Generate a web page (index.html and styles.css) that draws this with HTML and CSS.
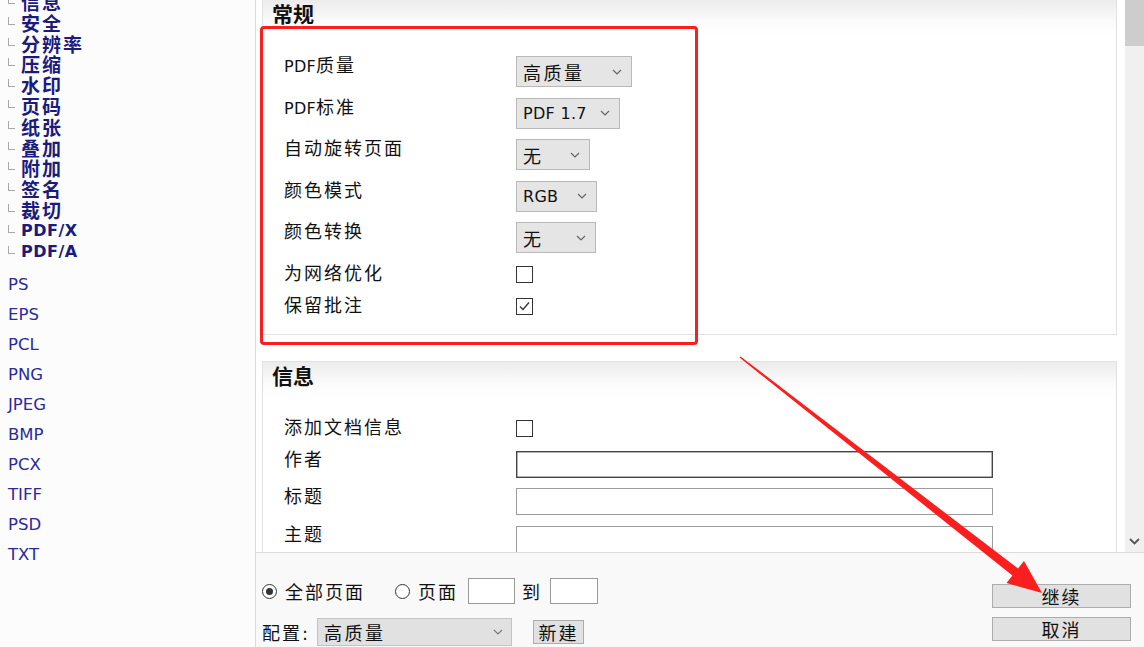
FILE: index.html
```html
<!DOCTYPE html>
<html lang="zh-CN">
<head>
    <meta charset="UTF-8">
    <title>PDF 设置</title>
    <link rel="stylesheet" href="styles.css">
</head>
<body>
<div class="app">
    <nav class="sidebar">
        <ul class="tree">
            <li><span class="branch"></span>信息</li>
            <li><span class="branch"></span>安全</li>
            <li><span class="branch"></span>分辨率</li>
            <li><span class="branch"></span>压缩</li>
            <li><span class="branch"></span>水印</li>
            <li><span class="branch"></span>页码</li>
            <li><span class="branch"></span>纸张</li>
            <li><span class="branch"></span>叠加</li>
            <li><span class="branch"></span>附加</li>
            <li><span class="branch"></span>签名</li>
            <li><span class="branch"></span>裁切</li>
            <li class="latin"><span class="branch"></span>PDF/X</li>
            <li class="latin"><span class="branch"></span>PDF/A</li>
        </ul>
        <ul class="formats">
            <li>PS</li>
            <li>EPS</li>
            <li>PCL</li>
            <li>PNG</li>
            <li>JPEG</li>
            <li>BMP</li>
            <li>PCX</li>
            <li>TIFF</li>
            <li>PSD</li>
            <li>TXT</li>
        </ul>
    </nav>

    <main class="main">
        <div class="scroller">
            <div class="content">
                <section class="group first">
                    <h2>常规</h2>
                    <div class="rows">
                        <div class="row sel">
                            <span class="label"><span class="en">PDF</span>质量</span>
                            <div class="combo" style="width: 116px">高质量
                                <svg width="10" height="6" viewBox="0 0 10 6"><polyline points="1,1 5,5 9,1" fill="none" stroke="#666" stroke-width="1.2"/></svg>
                            </div>
                        </div>
                        <div class="row sel">
                            <span class="label"><span class="en">PDF</span>标准</span>
                            <div class="combo" style="width: 104px"><span class="en">PDF 1.7</span>
                                <svg width="10" height="6" viewBox="0 0 10 6"><polyline points="1,1 5,5 9,1" fill="none" stroke="#666" stroke-width="1.2"/></svg>
                            </div>
                        </div>
                        <div class="row sel">
                            <span class="label">自动旋转页面</span>
                            <div class="combo" style="width: 74px">无
                                <svg width="10" height="6" viewBox="0 0 10 6"><polyline points="1,1 5,5 9,1" fill="none" stroke="#666" stroke-width="1.2"/></svg>
                            </div>
                        </div>
                        <div class="row sel">
                            <span class="label">颜色模式</span>
                            <div class="combo" style="width: 81px"><span class="en">RGB</span>
                                <svg width="10" height="6" viewBox="0 0 10 6"><polyline points="1,1 5,5 9,1" fill="none" stroke="#666" stroke-width="1.2"/></svg>
                            </div>
                        </div>
                        <div class="row sel">
                            <span class="label">颜色转换</span>
                            <div class="combo" style="width: 80px">无
                                <svg width="10" height="6" viewBox="0 0 10 6"><polyline points="1,1 5,5 9,1" fill="none" stroke="#666" stroke-width="1.2"/></svg>
                            </div>
                        </div>
                        <div class="row chk">
                            <span class="label">为网络优化</span>
                            <span class="checkbox"></span>
                        </div>
                        <div class="row chk">
                            <span class="label">保留批注</span>
                            <span class="checkbox">
                                <svg width="15" height="15" viewBox="0 0 15 15"><polyline points="3,7.5 6,10.5 12,3.5" fill="none" stroke="#333" stroke-width="1.3"/></svg>
                            </span>
                        </div>
                    </div>
                </section>

                <section class="group">
                    <h2>信息</h2>
                    <div class="rows">
                        <div class="row chk">
                            <span class="label">添加文档信息</span>
                            <span class="checkbox"></span>
                        </div>
                        <div class="row txt">
                            <span class="label">作者</span>
                            <input type="text" class="field focused">
                        </div>
                        <div class="row txt">
                            <span class="label">标题</span>
                            <input type="text" class="field">
                        </div>
                        <div class="row txt">
                            <span class="label">主题</span>
                            <input type="text" class="field">
                        </div>
                        <div class="row txt">
                            <span class="label">关键字</span>
                            <input type="text" class="field">
                        </div>
                    </div>
                </section>
            </div>
            <div class="scrollbar">
                <div class="thumb"></div>
                <div class="track"></div>
                <svg class="down" width="11" height="7" viewBox="0 0 11 7"><polyline points="1,1 5.5,5.5 10,1" fill="none" stroke="#555" stroke-width="1.8"/></svg>
            </div>
        </div>

        <div class="footer">
            <div class="footer-left">
                <div class="range">
                    <span class="radio on"></span>
                    <span class="text">全部页面</span>
                    <span class="radio second"></span>
                    <span class="text">页面</span>
                    <input type="text" class="page-box">
                    <span class="text to">到</span>
                    <input type="text" class="page-box end">
                </div>
                <div class="profile">
                    <span class="text">配置:</span>
                    <div class="combo profile-combo">高质量
                        <svg width="10" height="6" viewBox="0 0 10 6"><polyline points="1,1 5,5 9,1" fill="none" stroke="#777" stroke-width="1.1"/></svg>
                    </div>
                    <button class="btn small">新建</button>
                </div>
            </div>
            <div class="actions">
                <button class="btn">继续</button>
                <button class="btn">取消</button>
            </div>
        </div>
    </main>

    <!-- annotation drawn over the dialog -->
    <div class="highlight"></div>
    <svg class="arrow" width="1144" height="647" viewBox="0 0 1144 647">
        <polygon points="739.5,357.6 740.5,356.4 1018,568.6 1024,561 1042,593 1006.5,583 1012.4,575.6" fill="#fa1e1e"/>
    </svg>
</div>
</body>
</html>
```

FILE: styles.css
```css
* {
    box-sizing: border-box;
}

body {
    margin: 0;
    font-family: "DejaVu Sans", "Noto Sans CJK SC", sans-serif;
    color: #111;
    background-color: #fff;
}

.app {
    position: relative;
    display: flex;
    width: 1144px;
    height: 647px;
    overflow: hidden;
}

/* left navigation */

.sidebar {
    width: 256px;
    flex: none;
    background-color: #fcfcfc;
    border-right: 1px solid #d9d9d9;
}

.sidebar ul {
    list-style: none;
    margin: 0;
    padding: 0;
}

.tree {
    margin-top: -8px !important;
}

.tree li {
    height: 20.8px;
    line-height: 20.8px;
    font-family: "Noto Sans CJK SC", sans-serif;
    font-size: 19px;
    font-weight: bold;
    letter-spacing: 2px;
    color: #1b1b7c;
    white-space: nowrap;
}

.tree li.latin {
    font-family: "DejaVu Sans", sans-serif;
    font-size: 16px;
    letter-spacing: 0.5px;
}

.branch {
    display: inline-block;
    width: 7px;
    height: 8px;
    margin: 4px 6px 0 8px;
    vertical-align: top;
    border-left: 1px solid #a8a8a8;
    border-bottom: 1px solid #a8a8a8;
}

.formats {
    margin-top: 8px !important;
}

.formats li {
    height: 30px;
    line-height: 30px;
    padding-left: 8px;
    font-size: 16.5px;
    color: #2a2a9c;
}

/* main panel */

.main {
    flex: 1;
    display: flex;
    flex-direction: column;
}

.scroller {
    height: 552px;
    display: flex;
    overflow: hidden;
}

.content {
    flex: 1;
    padding: 0 8px 0 6px;
    overflow: hidden;
}

.group {
    border: 1px solid #e2e2e2;
    background-color: #fff;
    margin-top: 26px;
}

.group.first {
    margin-top: -1px;
}

.group h2 {
    margin: 0;
    height: 36px;
    padding: 1px 9px 0;
    font-family: "Noto Sans CJK SC", sans-serif;
    font-size: 21px;
    line-height: 24px;
    font-weight: bold;
    color: #111;
    background: linear-gradient(#ececec, #fbfbfb 60%, #fff);
}

.rows {
    padding: 20px 0 6px 21px;
}

.row {
    display: flex;
    align-items: flex-start;
}

.row.sel {
    height: 41.5px;
}

.row.chk {
    height: 32px;
}

.row.txt {
    height: 37.5px;
}

.label {
    width: 232px;
    flex: none;
    font-size: 18px;
    line-height: 20px;
    letter-spacing: 2px;
    white-space: nowrap;
}

.en {
    font-family: "DejaVu Sans", sans-serif;
    font-size: 16px;
    letter-spacing: 0.3px;
}

.combo {
    display: inline-flex;
    align-items: center;
    justify-content: space-between;
    height: 31px;
    padding: 0 9px 0 6px;
    font-size: 18px;
    letter-spacing: 2.5px;
    background-color: #e5e5e5;
    border: 1px solid #b9b9b9;
    white-space: nowrap;
}

.checkbox {
    display: inline-flex;
    align-items: center;
    justify-content: center;
    width: 17px;
    height: 17px;
    margin-top: 2px;
    border: 1px solid #333;
    background-color: #fff;
}

.field {
    width: 477px;
    height: 27px;
    margin: 1px 0 0;
    padding: 0 4px;
    border: 1px solid #9c9c9c;
    background-color: #fff;
    font-size: 16px;
    outline: none;
}

.field.focused {
    border: 1px solid #444;
    box-shadow: inset 0 0 0 0.5px #666;
}

.scrollbar {
    position: relative;
    width: 19px;
    flex: none;
    display: flex;
    flex-direction: column;
    background-color: #f0f0f0;
}

.thumb {
    height: 46px;
    background-color: #cdcdcd;
}

.track {
    flex: 1;
}

.scrollbar .down {
    position: absolute;
    left: 4px;
    bottom: 7px;
}

/* bottom bar */

.footer {
    flex: 1;
    display: flex;
    padding: 25px 13px 0 6px;
    background-color: #f9f9f9;
    border-top: 1px solid #dcdcdc;
}

.footer .text {
    font-size: 18px;
    letter-spacing: 2px;
    white-space: nowrap;
}

.range {
    display: flex;
    align-items: center;
    height: 26px;
}

.radio {
    width: 15px;
    height: 15px;
    flex: none;
    border: 1px solid #333;
    border-radius: 50%;
    background-color: #fff;
    margin-right: 8px;
    position: relative;
}

.radio.on::after {
    content: "";
    position: absolute;
    left: 3px;
    top: 3px;
    width: 7px;
    height: 7px;
    border-radius: 50%;
    background-color: #333;
}

.radio.second {
    margin-left: 30px;
    margin-right: 8px;
}

.page-box {
    width: 47px;
    height: 26px;
    margin: 0 0 0 10px;
    border: 1px solid #9a9a9a;
    background-color: #fff;
}

.range .to {
    margin-left: 7px;
}

.page-box.end {
    width: 48px;
    margin-left: 8px;
}

.profile {
    display: flex;
    align-items: center;
    margin-top: 14px;
    height: 28px;
}

.profile-combo {
    width: 195px;
    height: 28px;
    margin-left: 7px;
    padding-right: 8px;
    background-color: #e1e1e1;
    border-color: #c3c3c3;
}

.btn {
    height: 24px;
    padding: 0;
    font-family: "Noto Sans CJK SC", sans-serif;
    font-size: 18px;
    line-height: 20px;
    letter-spacing: 2px;
    color: #111;
    background-color: #e1e1e1;
    border: 1px solid #adadad;
}

.btn.small {
    width: 51px;
    margin-left: 21px;
}

.actions {
    margin-left: auto;
    padding-top: 6px;
    display: flex;
    flex-direction: column;
    gap: 9px;
}

.actions .btn {
    width: 139px;
}

/* red annotation */

.highlight {
    position: absolute;
    left: 260px;
    top: 26px;
    width: 438px;
    height: 319px;
    border: 3px solid #fa1e1e;
    border-radius: 4px;
}

.arrow {
    position: absolute;
    left: 0;
    top: 0;
    pointer-events: none;
}
```
